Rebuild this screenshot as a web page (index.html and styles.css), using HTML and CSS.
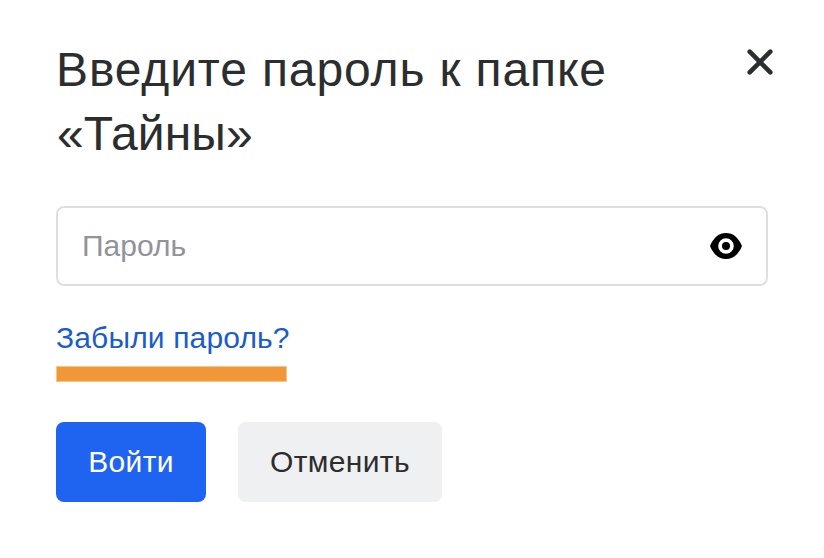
FILE: index.html
```html
<!DOCTYPE html>
<html lang="ru">
<head>
    <meta charset="UTF-8">
    <meta name="viewport" content="width=device-width, initial-scale=1.0">
    <title>Введите пароль</title>
    <link rel="stylesheet" href="styles.css">
</head>
<body>
    <form class="dialog">
        <div class="dialog-header">
            <h1 class="dialog-title"><span class="line line-first">Введите пароль к папке</span> <span class="line line-second">«Тайны»</span></h1>
            <button class="close-btn" type="button" aria-label="Закрыть">
                <svg width="28" height="28" viewBox="0 0 28 28"><path d="M3.700 3.700l20.600 20.600M24.300 3.700l-20.600 20.600" stroke="#2c2d2e" stroke-width="4.600" stroke-linecap="round" fill="none"/></svg>
            </button>
        </div>

        <div class="field">
            <input class="field-input" type="password" placeholder="Пароль">
            <button class="eye-btn" type="button" aria-label="Показать пароль">
                <svg width="32" height="26" viewBox="0 0 32 26"><path fill="#000" fill-rule="evenodd" d="M16 0C9 0 3.500 4.500 0 13c3.500 8.500 9 13 16 13s12.500-4.500 16-13C28.500 4.500 23 0 16 0zm0 20.800a7.800 7.800 0 1 1 0-15.600 7.800 7.800 0 0 1 0 15.600zm0-3.800a4 4 0 1 0 0-8 4 4 0 0 0 0 8z"/></svg>
            </button>
        </div>

        <a class="forgot" href="#">Забыли пароль?</a>
        <div class="marker"></div>

        <div class="actions">
            <button class="btn btn-primary" type="submit">Войти</button>
            <button class="btn btn-secondary" type="button">Отменить</button>
        </div>
    </form>
</body>
</html>
```
FILE: styles.css
```css
* {
    box-sizing: border-box;
}

body {
    margin: 0;
    background: #fff;
    color: #2c2d2e;
    font-family: "Liberation Sans", Arial, sans-serif;
}

button {
    padding: 0;
    border: none;
    background: none;
    font: inherit;
    cursor: pointer;
}

.dialog {
    padding: 38px 50px 0 56px;
}

.dialog-header {
    display: flex;
    justify-content: space-between;
    align-items: flex-start;
    height: 128px;
}

.dialog-title {
    margin: 0;
    font-size: 48px;
    font-weight: 400;
    line-height: 64px;
}

.line {
    display: block;
    white-space: nowrap;
}

.line-first {
    letter-spacing: 0.88px;
}

.line-second {
    padding-left: 1px;
    letter-spacing: 0.1px;
}

.close-btn {
    height: 28px;
    margin-top: 10px;
}

.close-btn svg,
.eye-btn svg {
    display: block;
}

/* password field */
.field {
    display: flex;
    align-items: center;
    width: 712px;
    height: 80px;
    margin-top: 40px;
    padding: 0 24px;
    border: 2px solid #dfdfe0;
    border-radius: 8px;
}

.field-input {
    flex: 1;
    padding: 0;
    border: none;
    outline: none;
    font: inherit;
    font-size: 30px;
}

.field-input::placeholder {
    color: #919399;
}

.forgot {
    display: block;
    width: 240px;
    margin-top: 32px;
    color: #1a5ccc;
    font-size: 30px;
    line-height: 40px;
    letter-spacing: 0.15px;
    white-space: nowrap;
    text-decoration: none;
}

/* orange marker under the link */
.marker {
    width: 231px;
    height: 16px;
    margin-top: 8px;
    border: 1px solid #f7c48c;
    background: #f19737;
}

.actions {
    display: flex;
    gap: 32px;
    margin-top: 40px;
}

.btn {
    height: 80px;
    border-radius: 8px;
    font-size: 30px;
    letter-spacing: 0.35px;
}

.btn-primary {
    width: 150px;
    background: #1f64f1;
    color: #fff;
}

.btn-secondary {
    width: 204px;
    background: #eff0f2;
    color: #2c2d2e;
}
```
